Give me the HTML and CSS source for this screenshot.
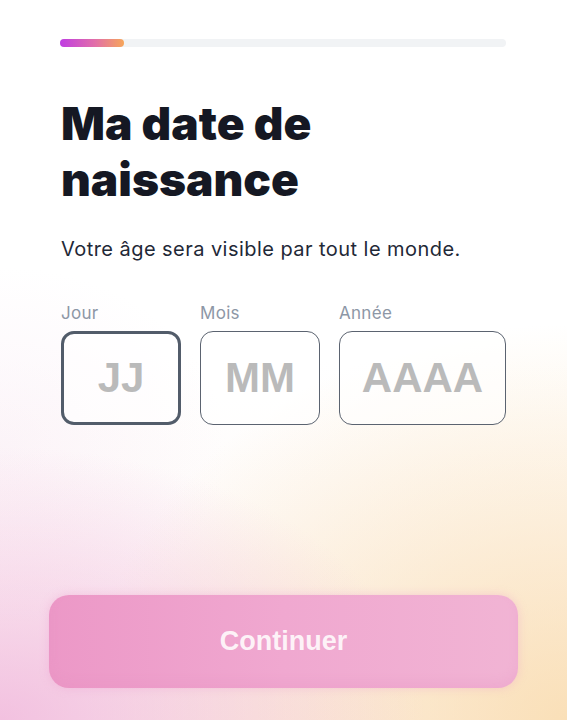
FILE: index.html
```html
<!DOCTYPE html>
<html lang="fr">
<head>
<meta charset="utf-8">
<title>Ma date de naissance</title>
<link rel="stylesheet" href="styles.css">
</head>
<body>
<div class="screen">
  <div class="content">
    <div class="progress"><div class="progress-fill"></div></div>
    <h1 class="title">Ma date de<br>naissance</h1>
    <p class="subtitle">Votre âge sera visible par tout le monde.</p>
    <div class="fields">
      <div class="field field-day">
        <span class="label">Jour</span>
        <div class="box box-active"><span class="ph">JJ</span></div>
      </div>
      <div class="field field-month">
        <span class="label">Mois</span>
        <div class="box"><span class="ph">MM</span></div>
      </div>
      <div class="field field-year">
        <span class="label">Année</span>
        <div class="box"><span class="ph">AAAA</span></div>
      </div>
    </div>
  </div>
  <div class="footer">
    <button class="continue">Continuer</button>
  </div>
</div>
</body>
</html>
```
FILE: styles.css
```css
* { box-sizing: border-box; }
html, body { margin: 0; padding: 0; }
body {
  width: 567px;
  height: 720px;
  overflow: hidden;
  font-family: Inter, "Noto Sans", sans-serif;
}
.screen {
  height: 720px;
  display: flex;
  flex-direction: column;
  background:
    radial-gradient(ellipse 75% 38% at 0% 100%, rgba(238, 172, 216, 0.72), rgba(238, 172, 216, 0) 100%),
    radial-gradient(ellipse 85% 55% at 100% 100%, rgba(249, 216, 164, 0.75), rgba(249, 216, 164, 0) 100%),
    radial-gradient(ellipse 40% 25% at 0% 62%, rgba(245, 222, 238, 0.3), rgba(245, 222, 238, 0) 100%),
    linear-gradient(to bottom, #ffffff 50%, #fdf6f3 100%);
}
.content {
  padding: 39px 61px 0 60px;
}
.progress {
  height: 8px;
  border-radius: 4px;
  background: #f1f3f5;
}
.progress-fill {
  width: 64px;
  height: 8px;
  border-radius: 4px;
  background: linear-gradient(90deg, #bf3de2, #e26fa8 55%, #f6a65a);
}
.title {
  margin: 48px 0 0 1px;
  font-size: 46px;
  line-height: 56px;
  font-weight: 900;
  color: #151823;
}
.subtitle {
  margin: 30px 0 0 1px;
  font-size: 20px;
  line-height: 24px;
  letter-spacing: 0.45px;
  color: #1f2937;
}
.fields {
  display: flex;
  gap: 19px;
  margin-top: 42px;
  padding-left: 1px;
}
.field {
  display: flex;
  flex-direction: column;
  gap: 8px;
}
.field-day, .field-month { width: 120px; }
.field-year { width: 167px; }
.label {
  font-size: 17px;
  line-height: 20px;
  letter-spacing: 0.3px;
  color: #8d97a6;
}
.box {
  height: 94px;
  border: 1.5px solid #5b6370;
  border-radius: 13px;
  display: flex;
  align-items: center;
  justify-content: center;
  background: rgba(255, 255, 255, 0.6);
}
.box-active {
  border: 3px solid #525c6a;
}
.ph {
  font-family: "Liberation Sans", Arial, sans-serif;
  font-weight: 700;
  font-size: 42px;
  color: #bababa;
}
.footer {
  margin-top: auto;
  padding: 0 49px 32px 49px;
}
.continue {
  width: 100%;
  height: 93px;
  border: none;
  border-radius: 20px;
  background: linear-gradient(90deg, #ec98c7, #f0a8d0 50%, #f1b4d4);
  box-shadow: 0 0 10px rgba(236, 150, 200, 0.35), inset 0 -6px 10px rgba(230, 140, 190, 0.2);
  font-family: "Liberation Sans", Arial, sans-serif;
  font-weight: 700;
  font-size: 27px;
  color: rgba(255, 250, 252, 0.92);
  padding: 0;
}
```
